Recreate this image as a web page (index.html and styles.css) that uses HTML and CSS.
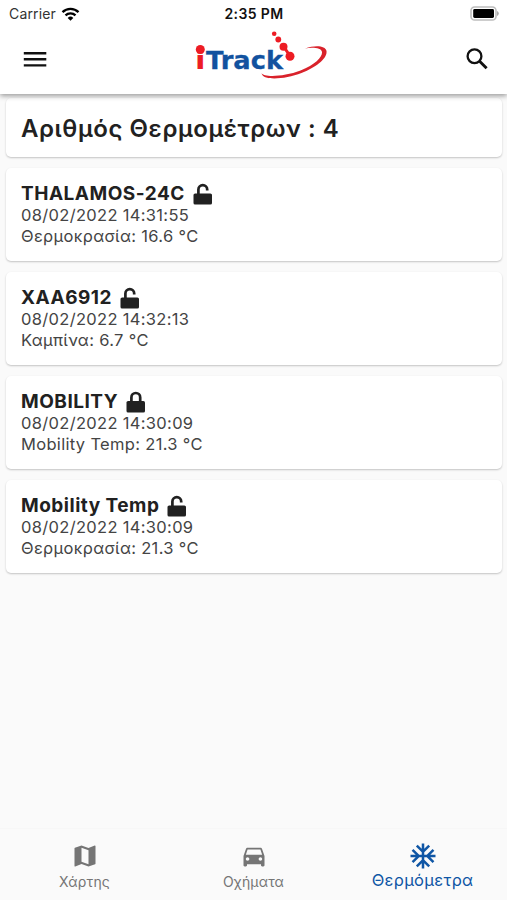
FILE: index.html
```html
<!DOCTYPE html>
<html lang="el">
<head>
    <meta charset="UTF-8">
    <meta name="viewport" content="width=device-width, initial-scale=1.0">
    <title>iTrack - Θερμόμετρα</title>
    <link rel="stylesheet" href="styles.css">
</head>
<body>
    <svg width="0" height="0" class="defs">
        <symbol id="lock-open" viewBox="0 0 20 22">
            <rect x="0.5" y="10.5" width="18.5" height="11" rx="1.6"/>
            <path d="M5.400 11.500V6.600a4.400 4.400 0 0 1 8.800 0v.8" fill="none" stroke="currentColor" stroke-width="2.700"/>
        </symbol>
        <symbol id="lock" viewBox="0 0 20 22">
            <rect x="0.5" y="10" width="18.5" height="11.5" rx="1.6"/>
            <path d="M5.400 11V6.400a4.400 4.400 0 0 1 8.800 0V11" fill="none" stroke="currentColor" stroke-width="2.700"/>
        </symbol>
    </svg>

    <header>
        <div class="status-bar">
            <div class="carrier">
                <span>Carrier</span>
                <svg width="19" height="14" viewBox="0 0 18 14" fill="none" stroke="#000" stroke-width="2.3">
                    <path d="M1 5.100a11.400 11.400 0 0 1 16 0M4 8.300a7.200 7.200 0 0 1 10 0"/>
                    <path d="M9 13.700 6.200 10.900a4 4 0 0 1 5.600 0z" fill="#000" stroke="none"/>
                </svg>
            </div>
            <div class="time">2:35 PM</div>
            <svg class="battery" width="31" height="15" viewBox="0 0 31 15">
                <rect x="3" y="1" width="25" height="13" rx="3.600" fill="#fff" stroke="#bdbdbd" stroke-width="1.600"/>
                <rect x="5.200" y="3" width="20.800" height="9" rx="1.400"/>
                <path d="M29 5v5q1.800-.8 1.800-2.500t-1.800-2.500z" fill="#aaa"/>
            </svg>
        </div>
        <nav class="toolbar">
            <button type="button" aria-label="Menu">
                <svg width="24" height="18" viewBox="0 0 24 18" stroke="#111" stroke-width="2.4">
                    <path d="M.8 3.200h22.500M.8 9.300h22.500M.8 15.400h22.500"/>
                </svg>
            </button>
            <svg class="logo" width="134" height="50" viewBox="0 0 134 50">
                <path d="M67.500 43c2 4.500 22 4 39-2.500 15-6 22-13.500 21.500-18.500-.5-4-9-5-17-3.500 10-3.500 20.500-3 21.500 2.500 1 7.500-11 16.500-25 22-17 6.500-39 8-40 0z" fill="#d9222b"/>
                <text class="logo-i" x="1" y="38.500" textLength="10.500" lengthAdjust="spacingAndGlyphs">i</text>
                <text class="logo-text" x="12" y="38.500" textLength="77" lengthAdjust="spacingAndGlyphs">Track</text>
                <g fill="#ed1c24" stroke="#ed1c24">
                    <circle cx="6.300" cy="19.500" r="4.500" stroke="none"/>
                    <path d="M90 17l6 9" stroke-width="3"/>
                    <circle cx="80.200" cy="3.800" r="2.300" stroke="none"/>
                    <circle cx="84.300" cy="9.500" r="2.900" stroke="none"/>
                    <circle cx="89.500" cy="16.800" r="4" stroke="none"/>
                    <circle cx="96" cy="26.300" r="4.500" stroke="none"/>
                </g>
            </svg>
            <button type="button" aria-label="Search">
                <svg width="24" height="24" viewBox="0 0 24 24" fill="none" stroke="#111">
                    <circle cx="9.500" cy="9.200" r="6.900" stroke-width="2.300"/>
                    <path d="M14.600 14.300l7 7" stroke-width="2.900"/>
                </svg>
            </button>
        </nav>
    </header>

    <main>
        <section class="card summary">
            <h1>Αριθμός Θερμομέτρων : 4</h1>
        </section>
        <section class="card">
            <h2><span>THALAMOS-24C</span><svg class="icon-lock"><use href="#lock-open"/></svg></h2>
            <p>08/02/2022 14:31:55</p>
            <p>Θερμοκρασία: 16.6 °C</p>
        </section>
        <section class="card">
            <h2><span>XAA6912</span><svg class="icon-lock"><use href="#lock-open"/></svg></h2>
            <p>08/02/2022 14:32:13</p>
            <p>Καμπίνα: 6.7 °C</p>
        </section>
        <section class="card">
            <h2><span>MOBILITY</span><svg class="icon-lock"><use href="#lock"/></svg></h2>
            <p>08/02/2022 14:30:09</p>
            <p>Mobility Temp: 21.3 °C</p>
        </section>
        <section class="card">
            <h2><span>Mobility Temp</span><svg class="icon-lock"><use href="#lock-open"/></svg></h2>
            <p>08/02/2022 14:30:09</p>
            <p>Θερμοκρασία: 21.3 °C</p>
        </section>
    </main>

    <footer class="tabs">
        <a class="tab">
            <svg width="28" height="28" viewBox="0 0 24 24"><path d="M20.500 3l-.16.03L15 5.100 9 3 3.360 4.900c-.21.07-.36.25-.36.480V20.500c0 .28.22.5.5.5l.16-.03L9 18.900l6 2.100 5.640-1.900c.21-.07.36-.25.36-.48V3.500c0-.28-.22-.5-.5-.5zM15 19l-6-2.110V5l6 2.110z"/></svg>
            <span>Χάρτης</span>
        </a>
        <a class="tab">
            <svg width="28" height="28" viewBox="0 0 24 24"><path d="M18.920 6.010C18.720 5.420 18.160 5 17.500 5h-11c-.66 0-1.210.42-1.420 1.010L3 12v8c0 .55.45 1 1 1h1c.55 0 1-.45 1-1v-1h12v1c0 .55.45 1 1 1h1c.55 0 1-.45 1-1v-8l-2.080-5.990zM6.500 16c-.83 0-1.500-.67-1.500-1.500S5.670 13 6.500 13s1.500.67 1.500 1.500S7.330 16 6.500 16zm11 0c-.83 0-1.500-.67-1.500-1.500s.67-1.500 1.500-1.500 1.500.67 1.500 1.500-.67 1.500-1.500 1.500zM5 11l1.500-4.500h11L19 11H5z"/></svg>
            <span>Οχήματα</span>
        </a>
        <a class="tab active">
            <svg width="30" height="30" viewBox="0 0 24 24"><path d="M22 11h-4.170l3.240-3.240-1.410-1.420L15 11h-2V9l4.660-4.660-1.420-1.410L13 6.170V2h-2v4.170L7.760 2.930 6.340 4.340 11 9v2H9L4.340 6.340 2.930 7.760 6.170 11H2v2h4.170l-3.240 3.240 1.410 1.420L9 13h2v2l-4.660 4.660 1.420 1.410L11 17.830V22h2v-4.170l3.240 3.240 1.420-1.410L13 15v-2h2l4.660 4.660 1.410-1.420L17.830 13H22z"/></svg>
            <span>Θερμόμετρα</span>
        </a>
    </footer>
</body>
</html>
```

FILE: styles.css
```css
:root {
    --primary-color: #0f56a5;
    --text-color: #212121;
    --muted-color: #757575;
    --bg-color: #fafafa;
}

* {
    box-sizing: border-box;
}

body {
    font-family: Inter, sans-serif;
    margin: 0;
    height: 900px;
    display: flex;
    flex-direction: column;
    background-color: var(--bg-color);
    color: var(--text-color);
    overflow: hidden;
}

.defs {
    position: absolute;
}

header {
    height: 94px;
    background-color: #fff;
    box-shadow: 0 2px 5px rgba(0,0,0,0.38);
    position: relative;
    z-index: 1;
}

.status-bar {
    height: 27px;
    padding: 0 8px 0 9px;
    display: grid;
    grid-template-columns: 1fr auto 1fr;
    align-items: center;
    color: #111;
    font-size: 14px;
}

.carrier {
    display: flex;
    align-items: center;
    gap: 5px;
    color: #333;
    letter-spacing: 0.15px;
}

.time {
    font-weight: 600;
    font-size: 14px;
    letter-spacing: 0.4px;
}

.battery {
    justify-self: end;
}

.toolbar {
    display: flex;
    justify-content: space-between;
    padding: 3px 18px 0 23px;
}

.toolbar button {
    border: none;
    background: none;
    padding: 0;
    height: 58px;
    display: flex;
    align-items: center;
}

.logo {
    margin-left: 9px;
}

.logo-i,
.logo-text {
    font-family: "DejaVu Sans", sans-serif;
    font-weight: bold;
    font-size: 25px;
}

.logo-i {
    fill: #ed1c24;
}

.logo-text {
    fill: #12529f;
    stroke: #12529f;
    stroke-width: 0.3px;
}

main {
    flex: 1;
    padding: 4px 5px 0 6px;
    display: flex;
    flex-direction: column;
    gap: 11px;
}

.card {
    height: 93px;
    padding: 14px 15px;
    background-color: #fff;
    border-radius: 5px;
    box-shadow: 0 1px 2px rgba(0,0,0,0.22);
}

.summary {
    height: 59px;
}

h1 {
    margin: 0;
    font-size: 24px;
    line-height: 33px;
    font-weight: 600;
    letter-spacing: 0.58px;
}

h2 {
    margin: 0;
    display: flex;
    align-items: center;
    gap: 8px;
    height: 23px;
    font-size: 19px;
    font-weight: 650;
    letter-spacing: 0.5px;
}

.icon-lock {
    width: 20px;
    height: 22px;
    fill: currentColor;
}

p {
    margin: 0;
    font-size: 16.500px;
    line-height: 21px;
    letter-spacing: 0.32px;
    color: #444;
}

.tabs {
    height: 72px;
    display: grid;
    grid-template-columns: repeat(3, 1fr);
    border-top: 1px solid #f7f7f7;
}

.tab {
    display: flex;
    flex-direction: column;
    align-items: center;
    padding-top: 13px;
    font-size: 14px;
    letter-spacing: 0.15px;
    color: var(--muted-color);
    fill: currentColor;
}

.tab span {
    line-height: 23px;
}

.tab.active {
    padding-top: 12px;
    font-size: 16.500px;
    letter-spacing: 0.3px;
    color: var(--primary-color);
}

.tab.active span {
    line-height: 19px;
}
```
